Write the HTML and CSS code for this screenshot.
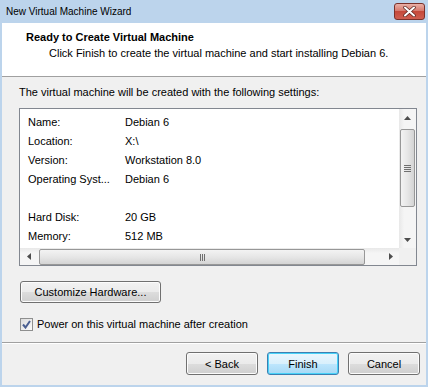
FILE: index.html
```html
<!DOCTYPE html>
<html lang="en">
<head>
  <meta charset="UTF-8" />
  <title>New Virtual Machine Wizard</title>
  <link rel="stylesheet" href="styles.css">
</head>
<body>
  <div class="window">
    <div class="titlebar">
      <span class="title">New Virtual Machine Wizard</span>
      <div class="close">
        <svg width="13" height="11" viewBox="0 0 13 11">
          <path d="M2 1.5 L11 9.5 M11 1.5 L2 9.5" stroke="#5a2620" stroke-width="3.4" stroke-linecap="round"/>
          <path d="M2 1.5 L11 9.5 M11 1.5 L2 9.5" stroke="#ffffff" stroke-width="2" stroke-linecap="round"/>
        </svg>
      </div>
    </div>

    <div class="frame">
      <div class="header">
        <h1>Ready to Create Virtual Machine</h1>
        <p>Click Finish to create the virtual machine and start installing Debian 6.</p>
      </div>

      <div class="content">
        <p class="intro">The virtual machine will be created with the following settings:</p>

        <div class="listbox">
          <div class="list-main">
            <div class="list-view">
              <div class="row"><span class="key">Name:</span><span>Debian 6</span></div>
              <div class="row"><span class="key">Location:</span><span>X:\</span></div>
              <div class="row"><span class="key">Version:</span><span>Workstation 8.0</span></div>
              <div class="row"><span class="key">Operating Syst...</span><span>Debian 6</span></div>
              <div class="row"></div>
              <div class="row"><span class="key">Hard Disk:</span><span>20 GB</span></div>
              <div class="row"><span class="key">Memory:</span><span>512 MB</span></div>
            </div>
            <div class="vscroll">
              <div class="arrow">
                <svg width="7" height="4" viewBox="0 0 7 4"><path d="M3.5 0 L7 4 L0 4 Z" fill="#4d4d4d"/></svg>
              </div>
              <div class="track">
                <div class="vthumb">
                  <span class="grip"></span><span class="grip"></span><span class="grip"></span><span class="grip"></span>
                </div>
              </div>
              <div class="arrow">
                <svg width="7" height="4" viewBox="0 0 7 4"><path d="M0 0 L7 0 L3.5 4 Z" fill="#4d4d4d"/></svg>
              </div>
            </div>
          </div>
          <div class="hscroll">
            <div class="arrow">
              <svg width="4" height="7" viewBox="0 0 4 7"><path d="M4 0 L4 7 L0 3.5 Z" fill="#4d4d4d"/></svg>
            </div>
            <div class="track">
              <div class="hthumb">
                <span class="grip"></span><span class="grip"></span><span class="grip"></span>
              </div>
            </div>
            <div class="arrow">
              <svg width="4" height="7" viewBox="0 0 4 7"><path d="M0 0 L4 3.5 L0 7 Z" fill="#4d4d4d"/></svg>
            </div>
            <div class="corner"></div>
          </div>
        </div>

        <button class="btn customize">Customize Hardware...</button>

        <label class="check">
          <span class="box">
            <svg width="9" height="9" viewBox="0 0 9 9"><path d="M1 4.5 L3.5 7.5 L8 1" fill="none" stroke="#4a5f91" stroke-width="2"/></svg>
          </span>
          Power on this virtual machine after creation
        </label>
      </div>

      <div class="footer">
        <button class="btn">&lt; Back</button>
        <button class="btn default">Finish</button>
        <button class="btn">Cancel</button>
      </div>
    </div>
  </div>
</body>
</html>
```

FILE: styles.css
```css
body {
  margin: 0;
  font-family: "Liberation Sans", Arial, sans-serif;
  font-size: 11px;
  line-height: 15px;
  color: #000;
}

.window {
  width: 428px;
  height: 387px;
  background: #bcd4ec;
  display: flex;
  flex-direction: column;
}

.titlebar {
  height: 23px;
  display: flex;
  align-items: flex-start;
  justify-content: space-between;
}

.title {
  font-size: 10px;
  margin: 4px 0 0 6px;
}

.close {
  width: 29px;
  height: 15px;
  margin: 3px 3px 0 0;
  border: 1px solid #7a312a;
  border-radius: 3px;
  background: linear-gradient(#eab0a7, #d77a6d 45%, #c54a3b 50%, #cf5e50);
  display: flex;
  align-items: center;
  justify-content: center;
}

.frame {
  flex: 1;
  margin: 0 2px 2px 2px;
  background: #f0f0f0;
  display: flex;
  flex-direction: column;
}

.header {
  height: 53px;
  background: #fff;
  border-bottom: 1px solid #a0a0a0;
  padding-left: 24px;
}

.header h1 {
  font-size: 11px;
  font-weight: bold;
  margin: 7px 0 0 0;
}

.header p {
  margin: 1px 0 0 23px;
}

.content {
  padding: 8px 9px 0 17px;
  height: 266px;
  box-sizing: border-box;
  border-bottom: 1px solid #a0a0a0;
}

.intro {
  margin: 0;
}

.listbox {
  margin-top: 8px;
  height: 158px;
  box-sizing: border-box;
  border: 1px solid #828790;
  background: #fff;
  display: flex;
  flex-direction: column;
}

.list-main {
  height: 139px;
  display: flex;
  overflow: hidden;
}

.list-view {
  flex: 1;
  padding: 4px 0 0 8px;
}

.row {
  height: 19px;
  display: flex;
  align-items: center;
}

.key {
  width: 97px;
}

.vscroll {
  width: 17px;
  background: linear-gradient(to right, #e8e8e8, #f5f5f5 30%, #f5f5f5);
  display: flex;
  flex-direction: column;
}

.vscroll .arrow {
  height: 17px;
  display: flex;
  align-items: center;
  justify-content: center;
}

.vscroll .track {
  flex: 1;
  padding: 3px 1px 0 1px;
}

.vthumb {
  height: 76px;
  border: 1px solid #979797;
  border-radius: 2px;
  background: linear-gradient(to right, #f3f3f3, #e6e6e6 50%, #d4d4d4);
  display: flex;
  flex-direction: column;
  align-items: center;
  justify-content: center;
  gap: 1px;
}

.vthumb .grip {
  width: 7px;
  height: 1px;
  background: #6f6f6f;
}

.hscroll {
  height: 17px;
  display: flex;
  background: linear-gradient(#e8e8e8, #f5f5f5 30%, #f5f5f5);
}

.hscroll .arrow {
  width: 17px;
  display: flex;
  align-items: center;
  justify-content: center;
}

.hscroll .track {
  flex: 1;
  padding: 1px 0 0 2px;
}

.hthumb {
  width: 324px;
  height: 14px;
  border: 1px solid #979797;
  border-radius: 2px;
  background: linear-gradient(#f3f3f3, #e6e6e6 50%, #d4d4d4);
  display: flex;
  align-items: center;
  justify-content: center;
  gap: 1px;
}

.hthumb .grip {
  width: 1px;
  height: 7px;
  background: #6f6f6f;
}

.corner {
  width: 17px;
  background: #f0f0f0;
}

.btn {
  font-family: inherit;
  font-size: 11px;
  height: 23px;
  padding: 0;
  border: 1px solid #707070;
  border-radius: 3px;
  background: linear-gradient(#f2f2f2, #ebebeb 50%, #dddddd 51%, #cfcfcf);
  box-shadow: inset 0 0 0 1px #fcfcfc;
  color: #000;
}

.btn.default {
  border-color: #3c7fb1;
  background: linear-gradient(#eaf6fd, #d9f0fc 50%, #bee6fd 51%, #a7d9f5);
  box-shadow: inset 0 0 0 1px #48d2f8;
}

.customize {
  margin: 15px 0 0 1px;
  width: 141px;
  height: 22px;
  display: block;
}

.check {
  margin-top: 14px;
  display: flex;
  align-items: center;
  gap: 4px;
  margin-left: 1px;
}

.box {
  width: 11px;
  height: 11px;
  border: 1px solid #8e8f8f;
  background: linear-gradient(135deg, #dcdcdc, #fbfbfb);
  display: flex;
  align-items: center;
  justify-content: center;
}

.footer {
  flex: 1;
  display: flex;
  justify-content: flex-end;
  align-items: flex-start;
  gap: 9px;
  padding: 8px 6px 0 0;
  border-top: 1px solid #fff;
}

.footer .btn {
  width: 72px;
}
```
